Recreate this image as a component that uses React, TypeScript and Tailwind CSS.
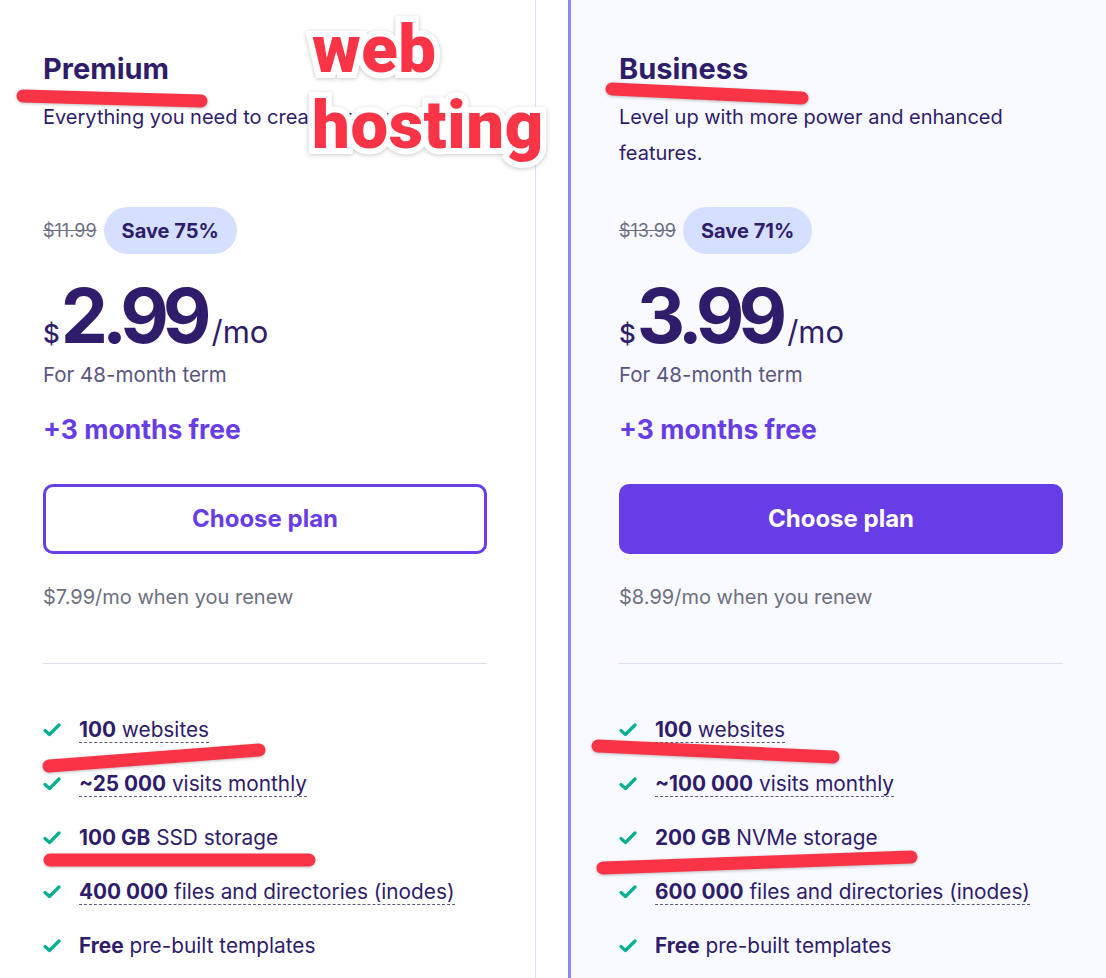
import React from "react";

type Feature = { bold: string; rest: string; dashed: boolean };

type Plan = {
  name: string;
  desc: string;
  oldPrice: string;
  save: string;
  price: string;
  renew: string;
  highlight: boolean;
  features: Feature[];
};

const plans: Plan[] = [
  {
    name: "Premium",
    desc: "Everything you need to create your website.",
    oldPrice: "$11.99",
    save: "Save 75%",
    price: "2.99",
    renew: "$7.99/mo when you renew",
    highlight: false,
    features: [
      { bold: "100", rest: " websites", dashed: true },
      { bold: "~25 000", rest: " visits monthly", dashed: true },
      { bold: "100 GB", rest: " SSD storage", dashed: false },
      { bold: "400 000", rest: " files and directories (inodes)", dashed: true },
      { bold: "Free", rest: " pre-built templates", dashed: false },
    ],
  },
  {
    name: "Business",
    desc: "Level up with more power and enhanced features.",
    oldPrice: "$13.99",
    save: "Save 71%",
    price: "3.99",
    renew: "$8.99/mo when you renew",
    highlight: true,
    features: [
      { bold: "100", rest: " websites", dashed: true },
      { bold: "~100 000", rest: " visits monthly", dashed: true },
      { bold: "200 GB", rest: " NVMe storage", dashed: false },
      { bold: "600 000", rest: " files and directories (inodes)", dashed: true },
      { bold: "Free", rest: " pre-built templates", dashed: false },
    ],
  },
];

const Check = () => (
  <svg width="18" height="14" viewBox="0 0 18 14" className="shrink-0">
    <path d="M2 7.5 L6.5 11.5 L16 2" fill="none" stroke="#00b090" strokeWidth="3.2" strokeLinecap="round" strokeLinejoin="round" />
  </svg>
);

const PlanCard = ({ plan }: { plan: Plan }) => {
  return (
    <section
      className={
        plan.highlight
          ? "w-[538px] shrink-0 h-full bg-[#f9faff] border-l-[3px] border-[#8c85ff] pl-[48px] pr-[40px] pt-[53px]"
          : "w-[536px] shrink-0 h-full bg-white border-r border-[#dbe2ff] pl-[43px] pr-[48px] pt-[53px]"
      }
    >
      <div className="w-[444px] flex flex-col">
        <h2 className="text-[29px] leading-[32px] font-bold text-[#2f1c6a]">{plan.name}</h2>
        <p className="mt-[14px] min-h-[72px] text-[20px] leading-[36px] text-[#2f1c6a]">{plan.desc}</p>

        {/* price */}
        <div className="mt-[36px] flex items-center gap-[7px]">
          <span className="text-[18px] text-[#6d7081] line-through">{plan.oldPrice}</span>
          <span className="h-[47px] px-[18px] rounded-full bg-[#d5dfff] flex items-center text-[20px] font-bold text-[#2f1c6a]">
            {plan.save}
          </span>
        </div>
        <div className="mt-[22px] flex items-baseline text-[#2f1c6a] h-[80px]">
          <span className="text-[26px] font-medium mr-[1px]">$</span>
          <span className="text-[75px] leading-[80px] font-bold tracking-[-6px]">{plan.price}</span>
          <span className="text-[31px] ml-[6px]">/mo</span>
        </div>
        <div className="mt-[5px] text-[20.5px] leading-[28px] text-[#5a5580]">For 48-month term</div>
        <div className="mt-[24px] text-[26.5px] leading-[32px] font-bold text-[#673de6]">+3 months free</div>

        <button
          className={
            plan.highlight
              ? "mt-[39px] h-[70px] w-full rounded-[10px] bg-[#673de6] text-white text-[24px] font-bold"
              : "mt-[39px] h-[70px] w-full rounded-[10px] border-[3px] border-[#673de6] bg-white text-[#673de6] text-[24px] font-bold"
          }
        >
          Choose plan
        </button>
        <div className="mt-[29px] text-[20px] leading-[28px] text-[#6d7081]">{plan.renew}</div>

        <div className="mt-[52px] h-px bg-[#dadfee]" />

        {/* features */}
        <ul className="mt-[54px] flex flex-col gap-[30px]">
          {plan.features.map((f, i) => (
            <li key={i} className="flex items-center gap-[18px] h-[24px]">
              <Check />
              <span
                className={
                  f.dashed
                    ? "text-[20.8px] leading-[24px] text-[#2f1c6a] border-b border-dashed border-[#5f5d76]"
                    : "text-[20.8px] leading-[24px] text-[#2f1c6a] border-b border-transparent"
                }
              >
                <b className="font-bold">{f.bold}</b>
                {f.rest}
              </span>
            </li>
          ))}
        </ul>
      </div>
    </section>
  );
};

export default function App() {
  return (
    <div className="relative w-[1106px] h-[978px] overflow-hidden bg-white font-['Inter',sans-serif]">
      <div className="flex h-full">
        <PlanCard plan={plans[0]} />
        <div className="w-[32px] shrink-0 bg-white" />
        <PlanCard plan={plans[1]} />
      </div>

      {/* red marker annotations */}
      <svg
        className="absolute inset-0 pointer-events-none drop-shadow-[0_1px_1.5px_rgba(0,0,0,0.25)]"
        width="1106"
        height="978"
      >
        <g stroke="#f93446" strokeWidth="13" strokeLinecap="round" fill="none">
          <line x1="23" y1="96" x2="201" y2="101" />
          <line x1="612" y1="89" x2="802" y2="98" />
          <line x1="49" y1="766" x2="259" y2="750" />
          <line x1="50" y1="860" x2="309" y2="860" />
          <line x1="598" y1="746" x2="833" y2="757" />
          <line x1="603" y1="868" x2="911" y2="857" />
        </g>
      </svg>
      <div className="absolute left-[312px] top-[11px] text-[67px] leading-[76px] font-black text-[#f93446] font-['Roboto',sans-serif] tracking-[0.6px] [-webkit-text-stroke:12px_white] [paint-order:stroke_fill] drop-shadow-[0_1px_2px_rgba(0,0,0,0.22)]">
        web
        <br />
        hosting
      </div>
    </div>
  );
}
